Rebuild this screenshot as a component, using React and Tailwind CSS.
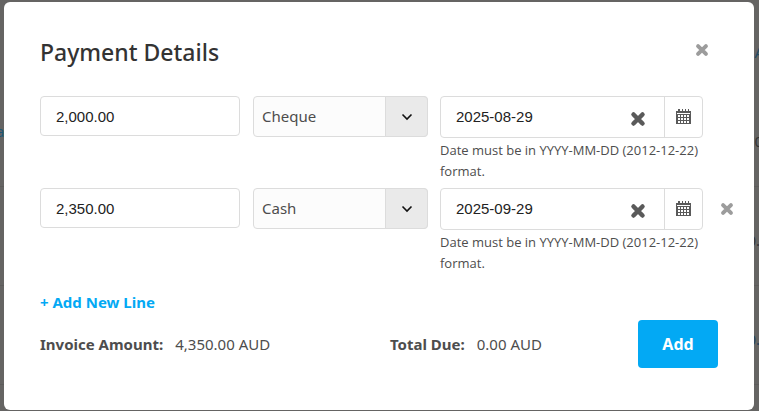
import { useState } from "react";

const METHODS = ["Cheque", "Cash", "Credit Card", "Bank Transfer"];

function CrossIcon({ className }) {
  return (
    <svg viewBox="0 0 16 16" className={className} aria-hidden="true">
      <path
        d="M3.500 3.500l9 9M12.500 3.500l-9 9"
        stroke="currentColor"
        strokeWidth="4.5"
        strokeLinecap="round"
        fill="none"
      />
    </svg>
  );
}

function CalendarIcon({ className }) {
  return (
    <svg viewBox="0 0 15 16" className={className} aria-hidden="true">
      <path fill="currentColor" d="M2 0h2v2h2V0h1v2h2V0h1v2h2V0h1v2h2v13H0V2h2z" />
      <path fill="#fff" d="M1 4h13v1H1z" />
      <path
        fill="#fff"
        d="M2 6h2v2H2zM5 6h2v2H5zM8 6h2v2H8zM11 6h2v2h-2zM2 9h2v2H2zM5 9h2v2H5zM8 9h2v2H8zM11 9h2v2h-2zM2 12h2v2H2zM5 12h2v2H5zM8 12h2v2H8zM11 12h2v2h-2z"
      />
    </svg>
  );
}

function PaymentLine({ line, removable, onChange, onRemove }) {
  return (
    <div className="flex items-start gap-3">
      <div className="w-[201px] pr-px">
        <input
          type="text"
          aria-label="Amount"
          value={line.amount}
          onChange={(e) => onChange({ amount: e.target.value })}
          className="h-10 w-full rounded border border-[#dcdcdc] px-[15px] font-['Liberation_Sans',sans-serif] text-[15px] text-[#222]"
        />
      </div>

      <div className="relative w-[175px]">
        <select
          aria-label="Payment method"
          value={line.method}
          onChange={(e) => onChange({ method: e.target.value })}
          className="h-[41px] w-full appearance-none rounded border border-[#dcdcdc] bg-[#fcfcfc] px-2 text-[15px] text-[#4d4d4d]"
        >
          {METHODS.map((m) => (
            <option key={m}>{m}</option>
          ))}
        </select>
        <span className="pointer-events-none absolute inset-y-0 right-0 flex w-[43px] items-center justify-center rounded-r border border-[#dcdcdc] bg-[#eaeaea]">
          <svg viewBox="0 0 12 8" className="h-2 w-3" aria-hidden="true">
            <path d="M1.500 1.500 6 6l4.500-4.500" stroke="#111" strokeWidth="1.6" fill="none" />
          </svg>
        </span>
      </div>

      <div className="w-[263px]">
        <div className="flex h-[42px] rounded border border-[#dcdcdc]">
          <input
            type="text"
            aria-label="Payment date"
            value={line.date}
            onChange={(e) => onChange({ date: e.target.value })}
            className="w-full min-w-0 flex-1 pl-[15px] font-['Liberation_Sans',sans-serif] text-[15px] text-[#222]"
          />
          <button
            type="button"
            aria-label="Clear date"
            onClick={() => onChange({ date: "" })}
            className="flex w-[52px] items-center justify-center pt-[3px] text-[#5a5a5a]"
          >
            <CrossIcon className="size-4" />
          </button>
          <button
            type="button"
            aria-label="Pick a date"
            className="flex w-[38px] items-center justify-center border-l border-[#dcdcdc] text-[#5a5a5a]"
          >
            <CalendarIcon className="h-4 w-[15px]" />
          </button>
        </div>
        <p className="mt-[2px] font-['Open_Sans',sans-serif] text-[13px] leading-[21px] text-[#4d4d4d]">
          Date must be in YYYY-MM-DD (2012-12-22) format.
        </p>
      </div>

      {removable && (
        <button
          type="button"
          aria-label="Remove line"
          onClick={onRemove}
          className="flex h-[42px] w-6 items-center justify-center text-[#9c9c9c]"
        >
          <CrossIcon className="size-[14px]" />
        </button>
      )}
    </div>
  );
}

// Invoice list that sits dimmed behind the dialog
function Backdrop() {
  return (
    <div className="absolute inset-0 overflow-hidden bg-[#656463] text-[15px] text-[#333]" aria-hidden="true">
      <div className="flex h-[88px] items-center justify-end pt-4 text-[#234a63]">
        <span className="-mr-4">AU</span>
      </div>
      <div className="flex h-[99px] items-center justify-between border-b border-[#5d5c5b]">
        <span className="-ml-1 pb-3 text-[#1c5876]">a</span>
        <span className="-mr-2 pt-2">0.</span>
      </div>
      <div className="flex h-[99px] items-center justify-end border-b border-[#5d5c5b]">
        <span className="-mr-px pt-2">0.</span>
      </div>
      <div className="flex h-[99px] items-center justify-end border-b border-[#5d5c5b]">
        <span className="-mr-px pt-2 text-[#23405a]">0.</span>
      </div>
    </div>
  );
}

export default function App() {
  const [lines, setLines] = useState([
    { id: 1, amount: "2,000.00", method: "Cheque", date: "2025-08-29" },
    { id: 2, amount: "2,350.00", method: "Cash", date: "2025-09-29" },
  ]);

  const updateLine = (id, changes) => {
    setLines((prev) => prev.map((l) => (l.id === id ? { ...l, ...changes } : l)));
  };

  const removeLine = (id) => {
    setLines((prev) => prev.filter((l) => l.id !== id));
  };

  const addLine = () => {
    setLines((prev) => [
      ...prev,
      { id: Date.now(), amount: "", method: "Cheque", date: "" },
    ]);
  };

  return (
    <div className="relative min-h-screen pt-[2px] pr-[5px] pb-[1px] pl-1 font-['Noto_Sans',sans-serif] text-[15px] text-[#4d4d4d]">
      <Backdrop />

      {/* Dialog */}
      <div role="dialog" aria-labelledby="title" className="relative rounded-md bg-white px-9 pt-8 pb-[42px]">
        <div className="flex items-start justify-between">
          <h1 id="title" className="text-[23px] leading-9 font-medium text-[#333]">
            Payment Details
          </h1>
          <button type="button" aria-label="Close" className="flex size-8 items-center justify-center text-[#9c9c9c]">
            <CrossIcon className="size-[14px]" />
          </button>
        </div>

        {/* Payment lines */}
        <div className="-mr-6 mt-[26px] flex flex-col gap-[6px]">
          {lines.map((line, i) => (
            <PaymentLine
              key={line.id}
              line={line}
              removable={i > 0}
              onChange={(changes) => updateLine(line.id, changes)}
              onRemove={() => removeLine(line.id)}
            />
          ))}
        </div>

        <button type="button" onClick={addLine} className="mt-4 block leading-6 font-bold text-[#03a9f4]">
          + Add New Line
        </button>

        {/* Totals */}
        <div className="mt-[6px] flex items-center">
          <dl className="flex flex-1 leading-6">
            <div className="flex w-[350px] gap-3">
              <dt className="font-bold">Invoice Amount:</dt>
              <dd>4,350.00 AUD</dd>
            </div>
            <div className="flex gap-3">
              <dt className="font-bold">Total Due:</dt>
              <dd>0.00 AUD</dd>
            </div>
          </dl>
          <button type="button" className="h-12 w-20 rounded bg-[#03a9f4] text-base font-bold text-white">
            Add
          </button>
        </div>
      </div>
    </div>
  );
}
